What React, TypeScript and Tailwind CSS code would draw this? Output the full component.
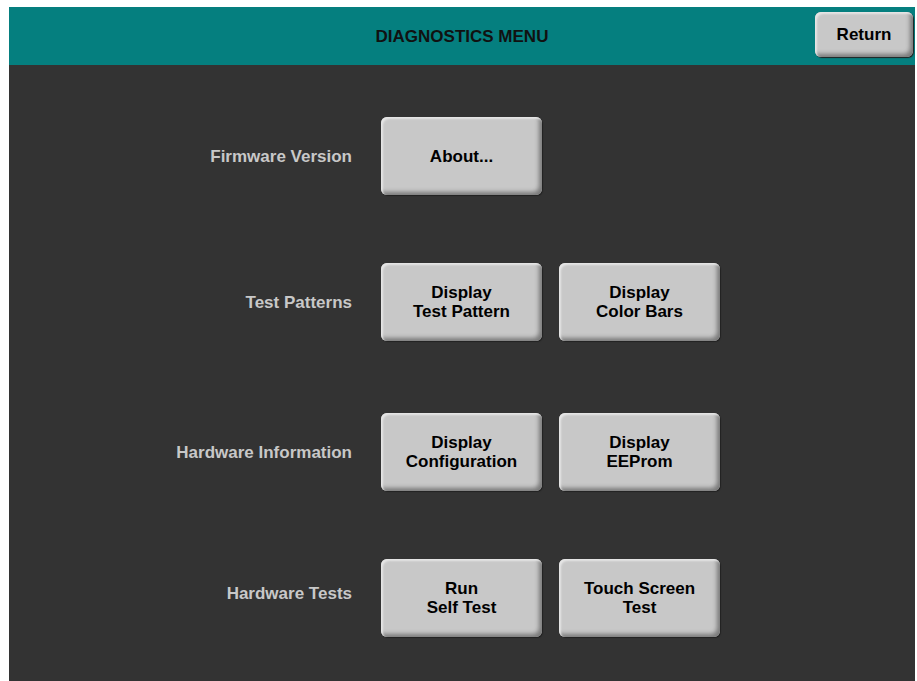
import React from 'react';

const rows: { label: string; buttons: string[][]; gap: string; shift: string }[] = [
  { label: 'Firmware Version', buttons: [['About...']], gap: 'mt-[52px]', shift: 'mt-[2px]' },
  { label: 'Test Patterns', buttons: [['Display', 'Test Pattern'], ['Display', 'Color Bars']], gap: 'mt-[68px]', shift: 'mt-[1px]' },
  { label: 'Hardware Information', buttons: [['Display', 'Configuration'], ['Display', 'EEProm']], gap: 'mt-[72px]', shift: 'mt-[1px]' },
  { label: 'Hardware Tests', buttons: [['Run', 'Self Test'], ['Touch Screen', 'Test']], gap: 'mt-[68px]', shift: '-mt-[8px]' },
];

const PanelButton = ({ lines, className }: { lines: string[]; className: string }) => (
  <button
    className={
      'flex flex-col items-center justify-center rounded-[6px] bg-[#c8c8c8] text-black font-bold leading-[19px] ' +
      'shadow-[inset_2px_2px_2px_#e6e6e6,inset_-3px_-3px_4px_#7a7a7a,1px_1px_1px_#222] ' +
      className
    }
  >
    {lines.map((l) => (
      <span key={l}>{l}</span>
    ))}
  </button>
);

export default function App() {
  return (
    <div className="w-[917px] h-[681px] bg-white pt-[7px] pl-[9px] pr-[2px] overflow-hidden font-['Liberation_Sans',Arial,sans-serif]">
      <div className="flex flex-col h-full bg-[#333333]">
        <header className="relative flex items-center justify-center h-[58px] bg-[#057f7f] shrink-0">
          <span className="text-[17px] font-bold text-[#111] pt-[2px]">DIAGNOSTICS MENU</span>
          <div className="absolute right-[2px] top-[5px]">
            <PanelButton lines={['Return']} className="w-[98px] h-[45px] text-[17px]" />
          </div>
        </header>
        <main className="flex flex-col">
          {rows.map((row) => (
            <div key={row.label} className={'flex items-center ' + row.gap}>
              <div className={'w-[343px] text-right text-[17px] font-bold text-[#c8c8c8] ' + row.shift}>{row.label}</div>
              <div className="flex gap-[17px] ml-[29px]">
                {row.buttons.map((b) => (
                  <PanelButton key={b.join()} lines={b} className="w-[161px] h-[78px] text-[17px]" />
                ))}
              </div>
            </div>
          ))}
        </main>
      </div>
    </div>
  );
}
